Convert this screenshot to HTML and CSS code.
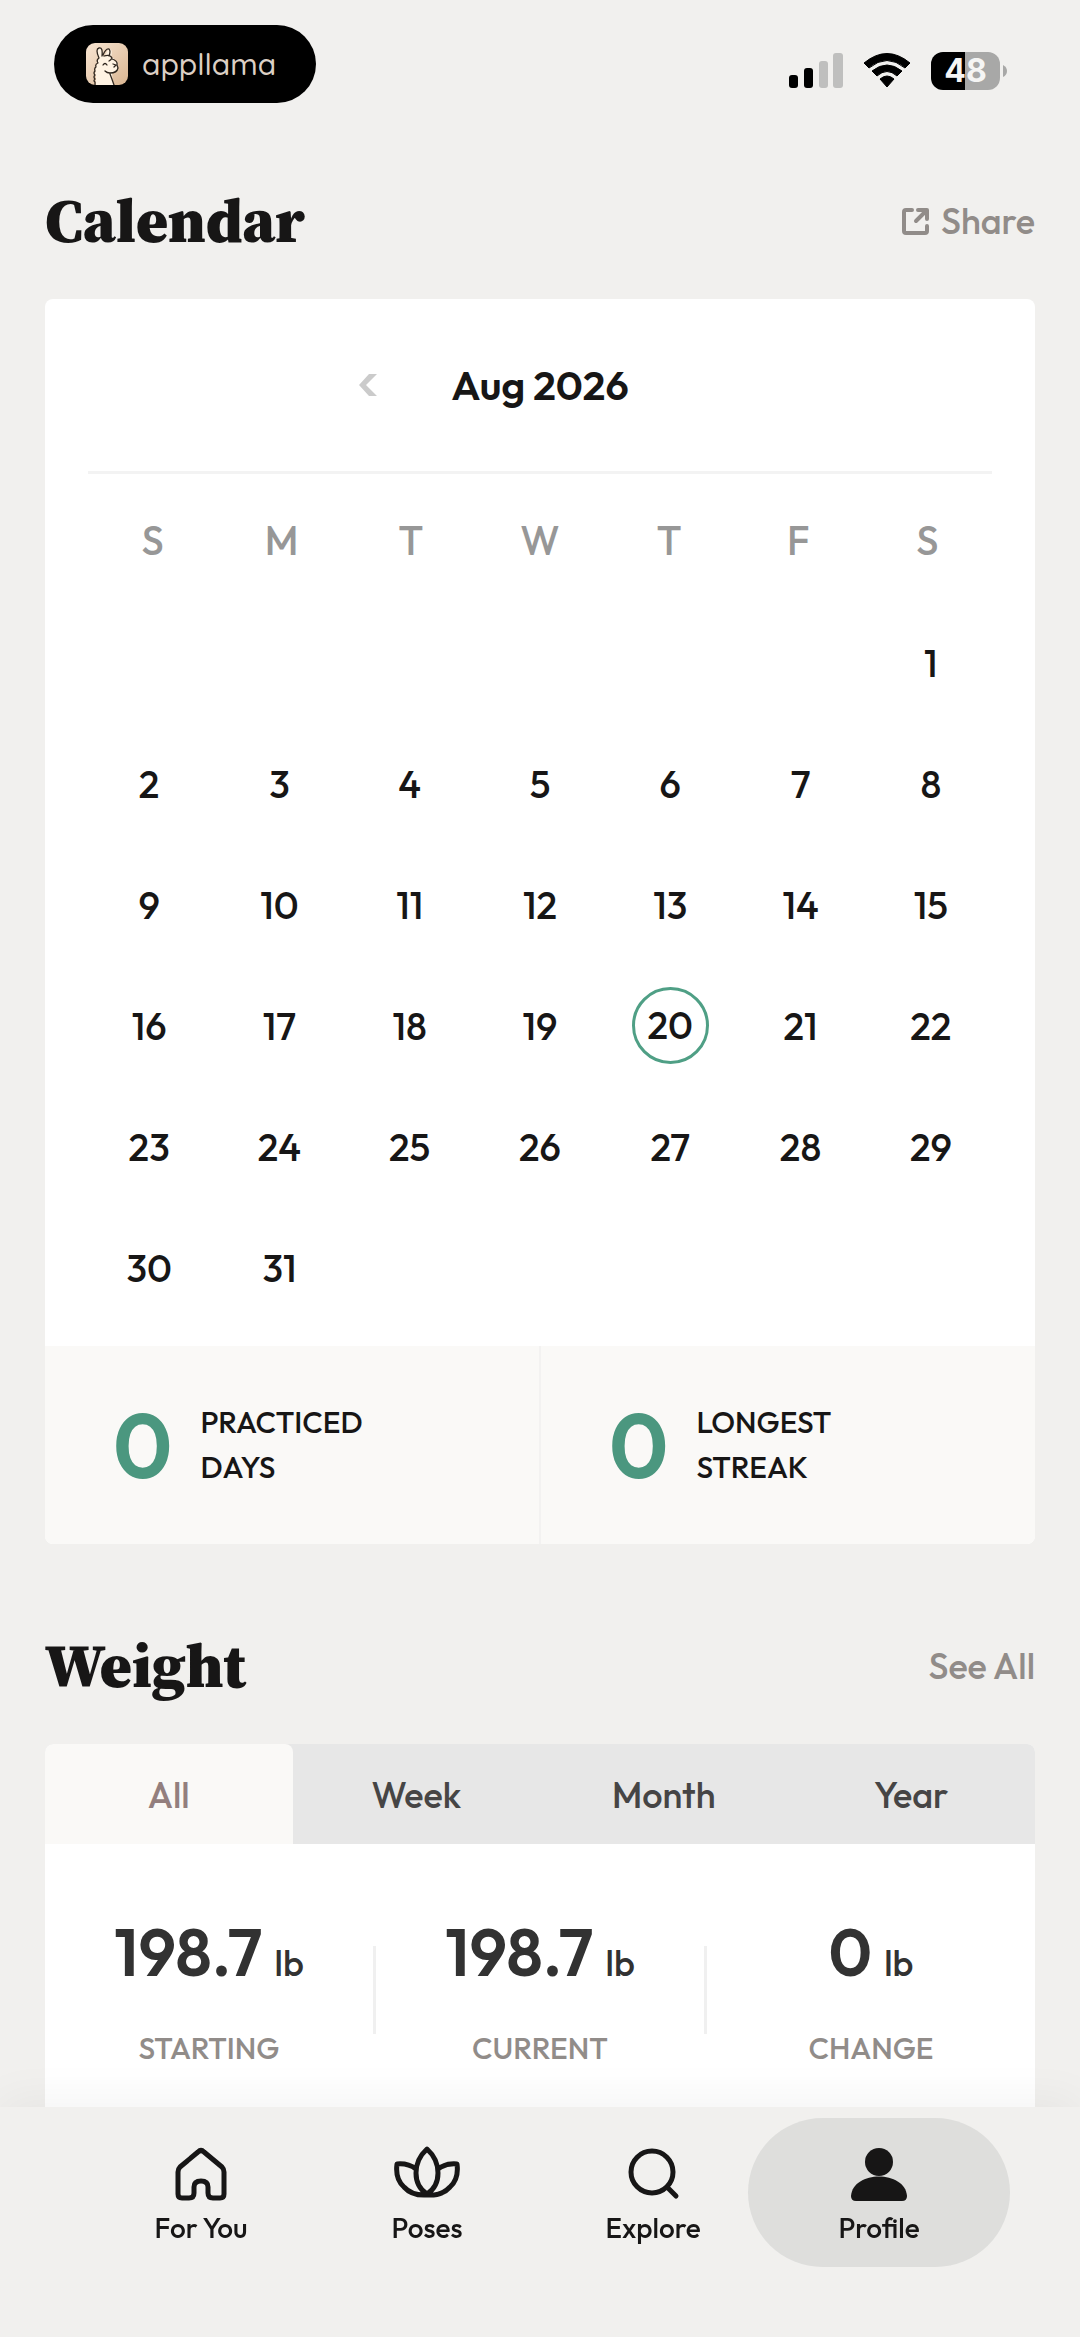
FILE: index.html
```html
<!DOCTYPE html>
<html lang="en">
	<head>
		<meta charset="UTF-8">
		<meta name="viewport" content="width=device-width, initial-scale=1">
		<title>Profile</title>
		<link rel="stylesheet" href="styles.css">
	</head>
	<body>
		<header class="status">
			<div class="brand">
				<svg class="brand-icon" viewBox="0 0 42 42">
					<defs>
						<linearGradient id="sand" x1="0" y1="0" x2="1" y2="1">
							<stop offset="0" stop-color="#f9e6d3"/>
							<stop offset="1" stop-color="#d9b591"/>
						</linearGradient>
					</defs>
					<rect width="42" height="42" rx="9" fill="url(#sand)"/>
					<path d="M10 42V33q-2-2 0-4-2-2 0-4-1-3 2-4-2-3 1-5-4-9 0-11 4-1 4 8l2 1q2-8 5-8 3 1 1 8 4 1 3 4 5 1 4 4 1 6-6 8 0 6 2 12Z" fill="#fff3e3"/>
					<path d="M9 42v-3q-2-1 0-3-2-2 0-4-2-2 0-4-1-3 1-4-1-3 2-4-2-3 1-5-4-9 0-10 4-1 3 8M17 12q3-7 6-6 2 2 0 7M18 13q6-2 8 2-1 2-3 3M26 16q6 2 5 6l1 3q-1 5-8 5-3 0-5-2M17 22q2-3 4 0M27 21l3 1-2 2M24 31q2 5 4 11" fill="none" stroke="#30271f" stroke-width="1.3" stroke-linecap="round" stroke-linejoin="round"/>
				</svg>
				<span class="brand-name">appllama</span>
			</div>
			<div class="signals">
				<svg width="54" height="36" viewBox="0 0 54 36">
					<rect x="0" y="22" width="9" height="13" rx="3"/>
					<rect x="15" y="15" width="9" height="20" rx="3"/>
					<rect x="30" y="8" width="9" height="27" rx="3" fill="#bfbfbe"/>
					<rect x="44" y="0" width="10" height="35" rx="3" fill="#bfbfbe"/>
				</svg>
				<svg width="48" height="36" viewBox="0 0 48 36">
					<path d="M1 10Q24-9 47 10L42 15Q24 0 6 15Z" stroke="#000" stroke-linejoin="round"/>
					<path d="M9 18Q24 6 39 18L34 23Q24 14 14 23Z" stroke="#000" stroke-linejoin="round"/>
					<path d="M17 26Q24 20 31 26L24 34Z" stroke="#000" stroke-linejoin="round"/>
				</svg>
				<div class="battery">
					<span class="battery-level">48</span>
					<svg width="4" height="12" viewBox="0 0 4 12"><path d="M0 0Q4 2 4 6T0 12Z" fill="#a8a8a7"/></svg>
				</div>
			</div>
		</header>

		<main class="content">
			<section class="section">
				<div class="section-head">
					<h2>Calendar</h2>
					<button class="link-btn" type="button">
						<svg width="27" height="27" viewBox="0 0 27 27">
							<path d="M10 2H4Q2 2 2 4V23Q2 25 4 25H23Q25 25 25 23V18M16 2H25V11M24 3 14 13" fill="none" stroke="#918c89" stroke-width="4" stroke-linecap="round" stroke-linejoin="round"/>
						</svg>
						Share
					</button>
				</div>
				<div class="card">
					<div class="month">
						<button class="month-prev" type="button" aria-label="Previous month">
							<svg width="18" height="22" viewBox="0 0 18 22"><path d="M10 0H18L7 11 18 22H10L0 11Z" fill="#cbcbcb"/></svg>
						</button>
						<span class="month-name">Aug 2026</span>
					</div>
					<table class="days">
						<thead>
							<tr><th>S</th><th>M</th><th>T</th><th>W</th><th>T</th><th>F</th><th>S</th></tr>
						</thead>
						<tbody>
							<tr><td></td><td></td><td></td><td></td><td></td><td></td><td>1</td></tr>
							<tr><td>2</td><td>3</td><td>4</td><td>5</td><td>6</td><td>7</td><td>8</td></tr>
							<tr><td>9</td><td>10</td><td>11</td><td>12</td><td>13</td><td>14</td><td>15</td></tr>
							<tr><td>16</td><td>17</td><td>18</td><td>19</td><td><span class="today">20</span></td><td>21</td><td>22</td></tr>
							<tr><td>23</td><td>24</td><td>25</td><td>26</td><td>27</td><td>28</td><td>29</td></tr>
							<tr><td>30</td><td>31</td><td></td><td></td><td></td><td></td><td></td></tr>
						</tbody>
					</table>
					<div class="totals">
						<div class="total">
							<strong>0</strong>
							<span>PRACTICED<br>DAYS</span>
						</div>
						<div class="total">
							<strong>0</strong>
							<span>LONGEST<br>STREAK</span>
						</div>
					</div>
				</div>
			</section>

			<section class="section">
				<div class="section-head">
					<h2>Weight</h2>
					<button class="link-btn" type="button">See All</button>
				</div>
				<div class="card">
					<div class="tabs">
						<button class="tab active" type="button">All</button>
						<button class="tab" type="button">Week</button>
						<button class="tab" type="button">Month</button>
						<button class="tab" type="button">Year</button>
					</div>
					<div class="weights">
						<div class="weight">
							<p><b>198.7</b> lb</p>
							<span>STARTING</span>
						</div>
						<i class="sep"></i>
						<div class="weight">
							<p><b>198.7</b> lb</p>
							<span>CURRENT</span>
						</div>
						<i class="sep"></i>
						<div class="weight">
							<p><b>0</b> lb</p>
							<span>CHANGE</span>
						</div>
					</div>
				</div>
			</section>
		</main>

		<nav class="nav">
			<a class="nav-item" href="#">
				<svg viewBox="0 0 56 56">
					<path d="M25 6 7 21Q5 23 5 26V48Q5 52 9 52H16Q21 52 21 47V41Q21 35 28 35T35 41V47Q35 52 40 52H47Q51 52 51 48V26Q51 23 49 21L31 6Q28 3 25 6Z"/>
				</svg>
				For You
			</a>
			<a class="nav-item" href="#">
				<svg class="lotus" viewBox="0 0 68 56">
					<path d="M34 3Q23 13 23 27T34 48Q45 41 45 27T34 3ZM23 23Q15 17 4 18 2 33 11 41 19 50 34 49 49 50 57 41 66 33 64 18 53 17 45 23"/>
				</svg>
				Poses
			</a>
			<a class="nav-item" href="#">
				<svg viewBox="0 0 56 56">
					<circle cx="27" cy="26" r="21"/>
					<path d="M43 42 51 50"/>
				</svg>
				Explore
			</a>
			<a class="nav-item active" href="#">
				<svg class="solid" viewBox="0 0 56 56">
					<circle cx="28" cy="16" r="14"/>
					<path d="M5 55Q0 55 0 50C2 24 54 24 56 50Q56 55 51 55Z"/>
				</svg>
				Profile
			</a>
		</nav>
	</body>
</html>
```

FILE: styles.css
```css
*{
	margin: 0;
	padding: 0;
	box-sizing: border-box;
}
body{
	min-height: 100vh;
	background: #f1f0ee;
	color: #171616;
	font-family: Outfit, Lato, "Liberation Sans", sans-serif;
	font-weight: 500;
}
button{
	border: none;
	background: none;
	font: inherit;
	color: inherit;
	cursor: pointer;
}
svg{
	display: block;
}

/* status bar */
.status{
	display: flex;
	justify-content: space-between;
	align-items: center;
	padding: 25px 73px 78px 54px;
}
.brand{
	display: flex;
	align-items: center;
	gap: 14px;
	height: 78px;
	padding: 0 40px 0 32px;
	border-radius: 39px;
	background: #000;
}
.brand-icon{
	width: 42px;
	height: 42px;
}
.brand-name{
	color: #dccfc4;
	font-family: Quicksand, Outfit, Lato, sans-serif;
	font-size: 30px;
	font-weight: 500;
	line-height: 42px;
}
.signals{
	display: flex;
	align-items: center;
	gap: 20px;
	padding-top: 14px;
}
.battery{
	display: flex;
	align-items: center;
	gap: 3px;
}
.battery-level{
	width: 69px;
	border-radius: 12px;
	background: linear-gradient(to right, #000 49%, #a8a8a7 49%);
	color: #f5f5f4;
	font-family: Inter, sans-serif;
	font-size: 32px;
	font-weight: 700;
	line-height: 38px;
	text-align: center;
}

/* sections */
.content{
	padding: 0 45px 240px;
}
.section{
	margin-bottom: 82px;
}
.section:last-child{
	margin-bottom: 0;
}
.section-head{
	display: flex;
	justify-content: space-between;
	align-items: center;
	height: 80px;
	margin-bottom: 38px;
}
.section-head h2{
	font-family: "Source Serif Pro", "Source Serif 4", "Liberation Serif", serif;
	font-size: 61px;
	font-weight: 900;
	line-height: 64px;
}
.link-btn{
	display: flex;
	align-items: center;
	gap: 12px;
	color: #918c89;
	font-size: 36px;
	line-height: 44px;
}
.card{
	border-radius: 8px;
	background: #fff;
	overflow: hidden;
}

/* calendar */
.month{
	display: grid;
	grid-template-columns: 1fr auto 1fr;
	align-items: center;
	height: 175px;
	margin: 0 43px;
	border-bottom: 3px solid #f3f3f3;
}
.month-prev{
	justify-self: end;
	padding: 20px;
	margin-right: 54px;
}
.month-name{
	font-size: 41px;
	font-weight: 600;
}
.days{
	display: block;
	padding: 4px 39px 18px;
}
.days thead,
.days tbody{
	display: block;
}
.days thead{
	padding: 0 4px;
}
.days tr{
	display: grid;
	grid-template-columns: repeat(7, 1fr);
	height: 121px;
}
.days thead tr{
	height: 124px;
}
.days th,
.days td{
	display: flex;
	justify-content: center;
	align-items: center;
	font-size: 38px;
}
.days th{
	color: #979797;
	font-size: 40px;
	font-weight: 500;
}
.today{
	width: 77px;
	height: 77px;
	border: 3px solid #4f9f85;
	border-radius: 50%;
	line-height: 71px;
	text-align: center;
}
.totals{
	display: flex;
	background: #faf9f7;
}
.total{
	display: flex;
	flex: 1;
	align-items: center;
	gap: 28px;
	height: 198px;
	padding-left: 68px;
}
.total + .total{
	border-left: 2px solid #f3f2f1;
}
.total strong{
	color: #4b977f;
	font-size: 90px;
	font-weight: 600;
	line-height: 90px;
}
.total span{
	font-size: 30px;
	line-height: 45px;
}

/* weight */
.tabs{
	display: flex;
	background: #e7e7e7;
}
.tab{
	flex: 1;
	height: 100px;
	color: #464545;
	font-size: 36px;
}
.tab.active{
	border-radius: 8px 8px 0 0;
	background: #faf9f7;
	color: #937f7e;
}
.weights{
	display: flex;
	align-items: center;
	padding: 68px 0 80px;
}
.weight{
	display: flex;
	flex: 1;
	flex-direction: column;
	align-items: center;
	gap: 36px;
}
.weight p{
	height: 80px;
	color: #323232;
	font-size: 36px;
	line-height: 80px;
}
.weight b{
	margin-right: 5px;
	font-size: 66px;
	font-weight: 600;
}
.weight span{
	color: #918c89;
	font-size: 30px;
	line-height: 40px;
}
.sep{
	width: 3px;
	height: 88px;
	background: #f0f0f0;
}

/* bottom navigation, stays over the scrolled page */
.nav{
	position: fixed;
	left: 0;
	right: 0;
	bottom: 0;
	display: grid;
	grid-template-columns: repeat(4, 1fr);
	align-items: start;
	height: 230px;
	padding: 11px 88px 0;
	background: #f1f0ee;
	box-shadow: 0 -6px 44px rgba(0, 0, 0, 0.05);
}
.nav-item{
	display: flex;
	flex-direction: column;
	align-items: center;
	gap: 9px;
	height: 149px;
	padding-top: 28px;
	color: #171616;
	font-size: 28px;
	line-height: 34px;
	text-decoration: none;
}
.nav-item.active{
	margin: 0 -18px;
	border-radius: 75px;
	background: #dededc;
}
.nav-item svg{
	width: 56px;
	height: 56px;
	fill: none;
	stroke: #171616;
	stroke-width: 5;
	stroke-linecap: round;
	stroke-linejoin: round;
}
.nav-item .lotus{
	width: 68px;
}
.nav-item .solid{
	fill: #171616;
	stroke: none;
}
```
